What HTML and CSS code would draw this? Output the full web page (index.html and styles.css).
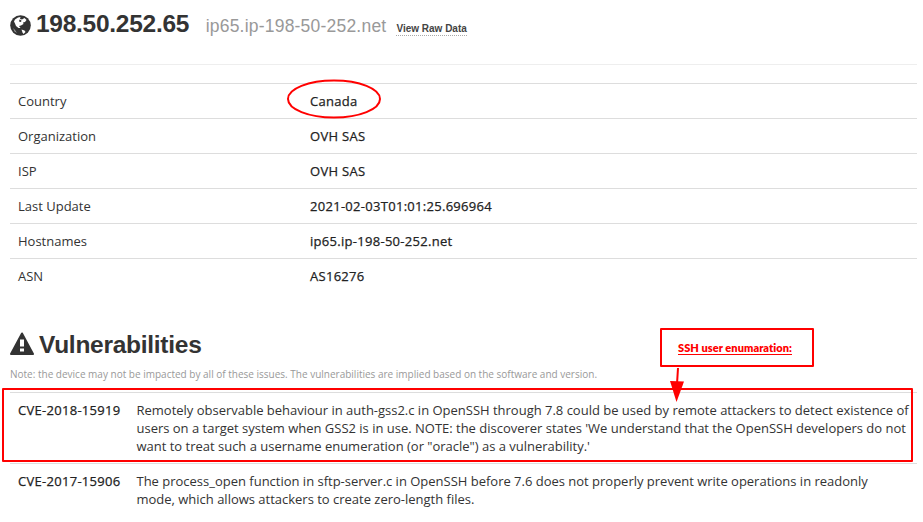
FILE: index.html
```html
<!DOCTYPE html>
<html lang="en">
<head>
<meta charset="utf-8">
<title>198.50.252.65</title>
<link rel="stylesheet" href="styles.css">
</head>
<body>
<main class="host">
  <header class="host-header">
    <svg class="globe" viewBox="0 0 21 21"><circle cx="10.500" cy="10.500" r="10.300" fill="#333"/><path d="M5 4.500 L8 2.500 L10.500 2 L10 4 L12 4.500 L14.500 3 L16.500 5 L15 7 L13 7.500 L13.500 9 L11 10.500 L9 11 L10.500 13 L8.500 13 L6 11 L5 8.500 L4 6.500Z" fill="#fff"/><path d="M9.500 4.500 L11.500 5.500 L11 7 L9 6.500Z" fill="#333"/><path d="M11.500 14.500 L14.500 15.500 L15.500 17 L13.500 19 L12.500 17.500Z" fill="#fff"/><path d="M3 13 L5 15 L7 18 L4.500 16.500Z" fill="#999"/></svg>
    <h1 class="ip">198.50.252.65</h1>
    <span class="hostname">ip65.ip-198-50-252.net</span>
    <a class="raw">View Raw Data</a>
  </header>
  <table class="facts">
    <tr><td>Country</td><th><span class="country">Canada<svg class="ring" viewBox="0 0 96 40"><ellipse cx="48" cy="20" rx="46" ry="18.500"/></svg></span></th></tr>
    <tr><td>Organization</td><th>OVH SAS</th></tr>
    <tr><td>ISP</td><th>OVH SAS</th></tr>
    <tr><td>Last Update</td><th>2021-02-03T01:01:25.696964</th></tr>
    <tr><td>Hostnames</td><th>ip65.ip-198-50-252.net</th></tr>
    <tr><td>ASN</td><th>AS16276</th></tr>
  </table>
  <h2 class="vuln-title"><svg class="warn" viewBox="0 0 24 24"><path d="M12 1.500 L23 22 H1Z" fill="#333" stroke="#333" stroke-width="2" stroke-linejoin="round"/><path d="M10 7.500h4v7h-4zM10 16.500h4v3h-4z" fill="#fff"/></svg>Vulnerabilities</h2>
  <p class="note">Note: the device may not be impacted by all of these issues. The vulnerabilities are implied based on the software and version.</p>
  <table class="cves">
    <tr><th>CVE-2018-15919</th><td>Remotely observable behaviour in auth-gss2.c in OpenSSH through 7.8 could be used by remote attackers to detect existence of<br>users on a target system when GSS2 is in use. NOTE: the discoverer states 'We understand that the OpenSSH developers do not<br>want to treat such a username enumeration (or "oracle") as a vulnerability.'</td></tr>
    <tr><th>CVE-2017-15906</th><td>The process_open function in sftp-server.c in OpenSSH before 7.6 does not properly prevent write operations in readonly<br>mode, which allows attackers to create zero-length files.</td></tr>
  </table>
</main>
<div class="highlight"></div>
<div class="callout"><span>SSH user enumaration:</span></div>
<svg class="arrow" viewBox="0 0 20 40"><path d="M9 2 L8 18" stroke="#f00" stroke-width="2"/><path d="M1 15 L15 15.500 L7.500 36Z" fill="#f00"/></svg>
</body>
</html>
```
FILE: styles.css
```css
* { box-sizing: border-box; }
body { margin: 0; width: 923px; height: 522px; overflow: hidden; position: relative; background: #fff; color: #333; font: 13px/18px "Open Sans", sans-serif; }
.host { padding: 0 6px 0 10px; }
.host-header { display: flex; align-items: baseline; height: 65px; padding-top: 4px; border-bottom: 1px solid #eee; white-space: nowrap; }
.globe { width: 21px; height: 21px; margin-right: 5px; align-self: flex-start; margin-top: 11px; }
.ip { margin: 0; font: bold 24.500px/40px "Liberation Sans", sans-serif; letter-spacing: -.27px; }
.hostname { margin-left: 16.500px; color: #999; font: 17.500px/40px "Liberation Sans", sans-serif; letter-spacing: .21px; }
.raw { margin-left: 10px; font: bold 10px/13px "Liberation Sans", sans-serif; color: #444; border-bottom: 1px dotted #aaa; }
.facts { width: 100%; margin-top: 18px; border-collapse: separate; border-spacing: 0; }
.facts td, .facts th { height: 35px; padding: 8px; border-top: 1px solid #ddd; text-align: left; line-height: 18px; }
.facts td { width: 292px; }
.facts th, .cves th { font-weight: 500; letter-spacing: .29px; color: #222; -webkit-text-stroke: .25px #222; }
.country { position: relative; }
.ring { position: absolute; left: -24px; top: -13.500px; width: 96px; height: 40px; fill: none; stroke: #f00; stroke-width: 2; }
.vuln-title { display: flex; align-items: center; margin: 32px 0 0; font: bold 24.500px/40px "Liberation Sans", sans-serif; letter-spacing: -.27px; }
.warn { width: 24px; height: 24px; margin: -2px 5px 0 0; }
.note { margin: 0 0 9px; color: #999; font-size: 10px; line-height: 18px; }
.cves { width: 100%; border-spacing: 0; }
.cves td, .cves th { padding: 8px; border-top: 1px solid #ddd; text-align: left; vertical-align: top; white-space: nowrap; }
.cves td { letter-spacing: -.008px; }
.cves th { width: 118px; }
.highlight { position: absolute; left: 2px; top: 388px; width: 911px; height: 74px; border: 2px solid #f00; border-radius: 1px; }
.callout { position: absolute; left: 660px; top: 328px; width: 154px; height: 39px; padding: 2px 4px 0 0; border: 2px solid #f00; border-radius: 1px; display: flex; justify-content: center; align-items: center; color: #f00; font: 800 11px/12px Lato, sans-serif; letter-spacing: .05px; }
.callout span { border-bottom: 1px solid #f00; }
.arrow { position: absolute; left: 669px; top: 366px; width: 20px; height: 40px; }
```
